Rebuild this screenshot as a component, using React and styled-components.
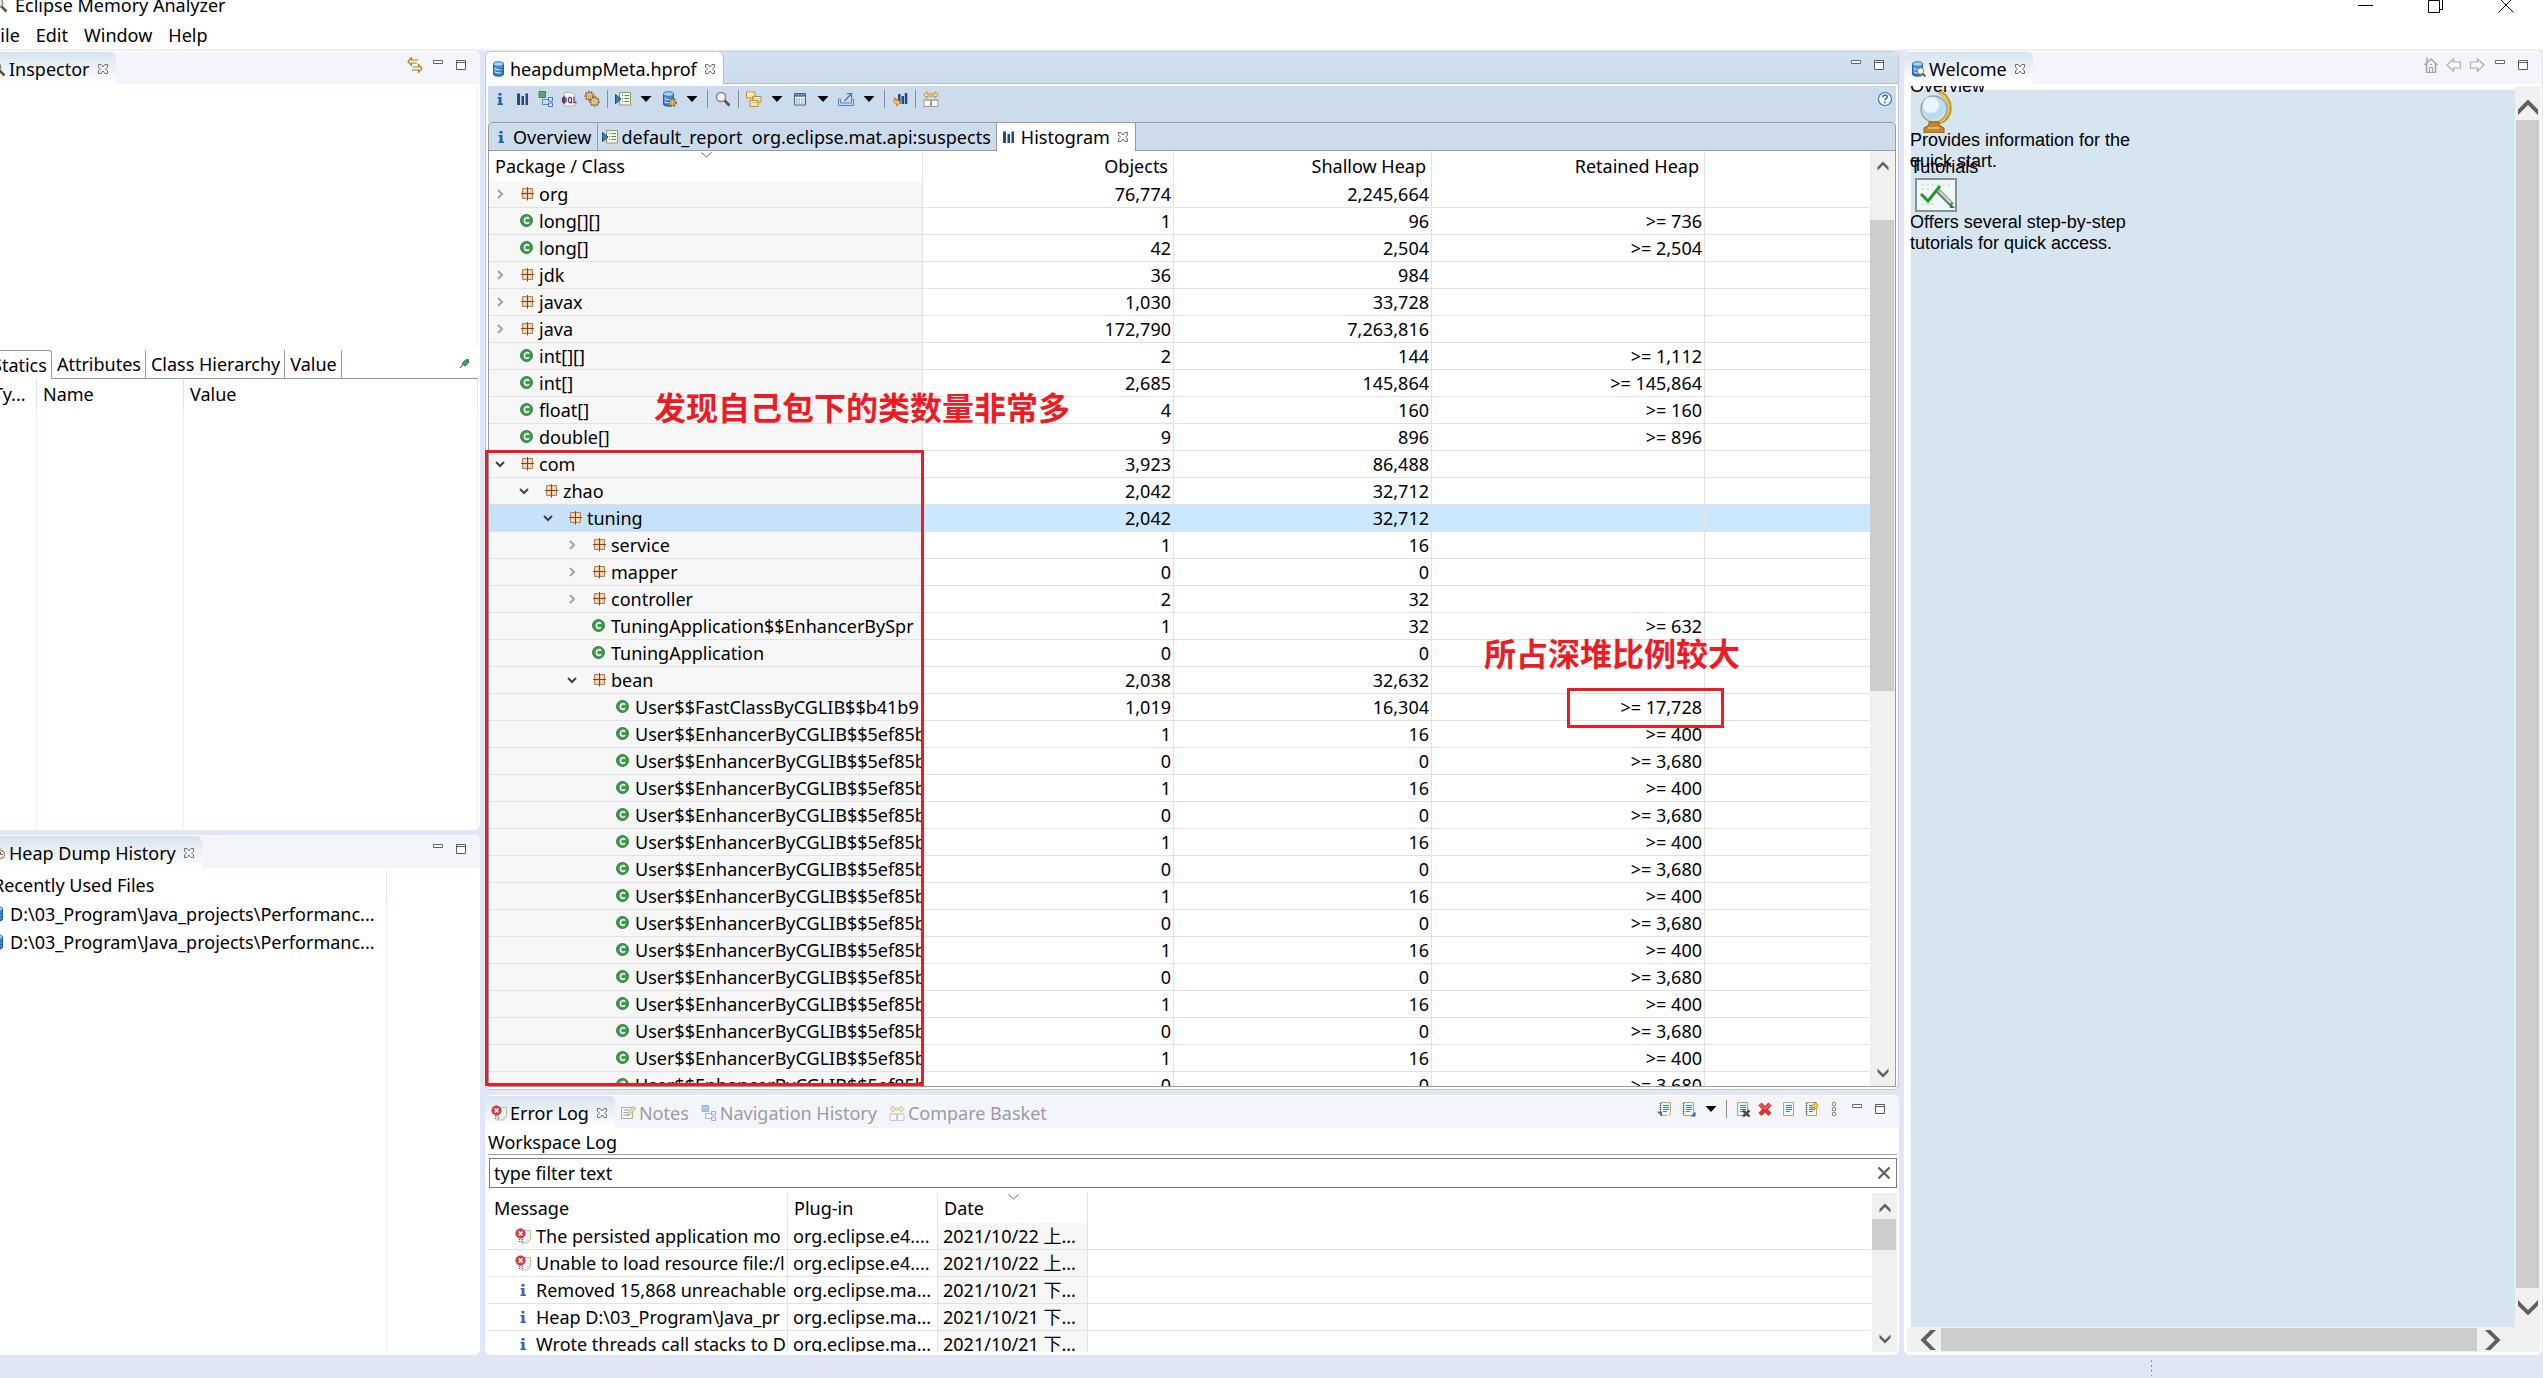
import React from 'react';
import styled, { createGlobalStyle, css } from 'styled-components';

const GlobalStyle = createGlobalStyle`
  *, *::before, *::after { box-sizing: border-box; }
  html, body, #root { height: 100%; }
  body {
    margin: 0;
    overflow: hidden;
    background: #e0e6f6;
    color: #000;
    font: 18px/26px "Noto Sans", "Noto Sans CJK SC", sans-serif;
  }
  button, input { font: inherit; color: inherit; }
  svg { display: block; flex: none; }
`;

/* ---------- window frame ---------- */

const Frame = styled.div`
  height: 100%;
  overflow: hidden;
`;

const Shell = styled.div`
  margin: -10px 0 0 -16px;
  height: calc(100% + 10px);
  display: flex;
  flex-direction: column;
`;

const TitleBar = styled.header`
  flex: none;
  height: 30px;
  padding-left: 8px;
  display: flex;
  align-items: center;
  gap: 7px;
  background: #fff;
`;

const TitleText = styled.h1`
  margin: 0;
  flex: 1;
  font-size: 18px;
  font-weight: 400;
`;

const WindowButton = styled.button`
  width: 70px;
  height: 30px;
  padding: 0;
  border: 0;
  background: none;
  display: grid;
  place-items: center;
`;

const WindowButtons = styled.div`
  display: flex;
  padding: 0 2px 4px 0;
  height: 30px;
`;

const MenuBar = styled.nav`
  flex: none;
  height: 31px;
  padding-left: 7px;
  display: flex;
  align-items: center;
  gap: 16px;
  background: #fff;
  border-bottom: 2px solid #f0f0f0;
`;

const MenuItem = styled.button`
  padding: 0;
  border: 0;
  background: none;
`;

const Workbench = styled.main`
  flex: 1;
  min-height: 0;
  display: grid;
  grid-template-columns: 496px minmax(0, 1fr) 638px;
  gap: 5px;
  padding-right: 1px;
`;

const Column = styled.div`
  display: grid;
  grid-template-rows: ${(p) => p.$rows};
  gap: 5px;
  min-height: 0;
`;

const StatusBar = styled.footer`
  flex: none;
  height: 23px;
  padding: 5px 391px 2px 0;
  display: flex;
  justify-content: flex-end;
`;

const Grip = styled.div`
  width: 1px;
  background: repeating-linear-gradient(#8f8f8f 0 2px, transparent 2px 5px);
`;

/* ---------- view panels ---------- */

const Panel = styled.section`
  min-width: 0;
  min-height: 0;
  display: flex;
  flex-direction: column;
  background: #fff;
  border-radius: 6px;
  overflow: hidden;
`;

const EditorPanel = styled(Panel)`
  border: 1px solid #c6c8cf;
  overflow: visible;
`;

const PanelHeader = styled.div`
  flex: none;
  height: 33px;
  display: flex;
  background: #f4f5fb;
  border-top: 1px solid #fff;
  border-radius: 6px 6px 0 0;
  ${(p) =>
    p.$editor &&
    css`
      height: 32px;
      border-top: 0;
      background: linear-gradient(#d3e2f1, #cddcec);
      border-bottom: 1px solid #b4b9cf;
    `}
`;

const Tab = styled.button`
  padding: 2px 8px 0 6px;
  border: 0;
  display: flex;
  align-items: center;
  gap: 3px;
  white-space: nowrap;
  color: ${(p) => (p.$idle ? '#9b9ba0' : '#000')};
  background: ${(p) => (p.$idle ? 'none' : 'linear-gradient(#d8e3ef, #fff)')};
  border-radius: 6px 6px 0 0;
  > svg:last-child:not(:first-child) { margin-left: 5px; }
`;

const EditorTab = styled(Tab)`
  height: 32px;
  background: #fff;
  padding-left: 5px;
  border-right: 1px solid #b4b9cf;
`;

const IdleTab = styled(Tab)`
  padding: 2px 7px 0 5px;
`;

const HeaderTools = styled.div`
  margin-left: auto;
  padding-right: 8px;
  height: 25px;
  display: flex;
`;

const ToolButton = styled.button`
  width: 23px;
  height: 25px;
  padding: 0;
  border: 0;
  background: none;
  display: grid;
  place-items: center;
`;

const ToolSeparator = styled.span`
  width: 8px;
  height: 18px;
  align-self: center;
  background: linear-gradient(#8a8f96, #8a8f96) center / 1px 100% no-repeat;
`;

const ToolBar = styled.div`
  flex: none;
  height: 36px;
  padding-bottom: 11px;
  display: flex;
  background: #cddced;
  > :last-child { margin-left: auto; }
`;

const EditorBody = styled.div`
  flex: 1;
  min-height: 0;
  margin: 2px 2px 2px;
  display: flex;
  flex-direction: column;
`;

const Folder = styled.div`
  flex: 1;
  min-height: 0;
  display: flex;
  flex-direction: column;
  border: 1px solid #9a9a9a;
  border-radius: 4px 4px 0 0;
  background: #cddced;
`;

const FolderTabs = styled.div`
  flex: none;
  height: 28px;
  display: flex;
  &::after { content: ''; flex: 1; border-bottom: 1px solid #9a9a9a; }
`;

const FolderTab = styled.button`
  height: 28px;
  padding: 0 5px 0 4px;
  border: 0;
  border-right: 1px solid #9a9a9a;
  border-bottom: ${(p) => (p.$active ? 0 : '1px solid #9a9a9a')};
  background: ${(p) => (p.$active ? '#fff' : 'none')};
  display: flex;
  align-items: center;
  gap: 4px;
  white-space: pre;
  > svg:nth-of-type(2) { margin: 0 2px 0 4px; }
`;

/* ---------- tables ---------- */

const Pane = styled.div`
  position: relative;
  flex: 1;
  min-height: 0;
  display: flex;
  background: #fff;
`;

const TableClip = styled.div`
  flex: 1;
  min-width: 0;
  overflow: hidden;
`;

const Table = styled.table`
  width: ${(p) => p.$width || '100%'};
  height: ${(p) => p.$height || 'auto'};
  table-layout: fixed;
  border-collapse: separate;
  border-spacing: 0;
`;

const Col = styled.col`
  width: ${(p) => (p.$w ? p.$w + 'px' : 'auto')};
`;

const HeadCell = styled.th`
  position: relative;
  height: 30px;
  padding: 0 5px 0 6px;
  font-weight: 400;
  text-align: ${(p) => p.$align || 'left'};
  white-space: nowrap;
  border-right: 1px solid ${(p) => (p.$last ? 'transparent' : '#e2e2e2')};
`;

const SortMark = styled.span`
  position: absolute;
  top: 1px;
  left: calc(50% - 5px);
`;

const Cell = styled.td`
  height: 27px;
  padding: 0 ${(p) => (p.$align ? 2 : 0)}px 0 ${(p) => (p.$align ? 0 : 5)}px;
  overflow: hidden;
  white-space: nowrap;
  text-align: ${(p) => p.$align || 'left'};
  background: ${(p) => (p.$sorted ? '#f7f7f7' : 'none')};
  border-right: 1px solid ${(p) => (p.$last ? 'transparent' : '#e2e2e2')};
  border-bottom: 1px solid #e2e2e2;
`;

const Row = styled.tr`
  ${(p) =>
    p.$selected &&
    css`
      background: #cce8ff;
      ${Cell}:first-child { background: #c7e1f8; }
    `}
`;

const TreeCell = styled(Cell)`
  padding-left: ${(p) => p.$level * 24}px;
`;

const TreeLabel = styled.div`
  display: flex;
  align-items: center;
  gap: 4px;
`;

const Twisty = styled.span`
  flex: none;
  width: 26px;
  height: 26px;
  padding-right: 4px;
  display: grid;
  place-items: center;
`;

const LogLabel = styled.div`
  display: flex;
  align-items: center;
  gap: 5px;
  padding-left: 22px;
`;

const FillCell = styled.td`
  border-right: 1px solid #e6effb;
`;

const FileRow = styled.td`
  height: 28px;
  padding: 0 0 0 3px;
  border-right: 1px solid #e6effb;
`;

const FileLink = styled.a`
  display: flex;
  align-items: center;
  gap: 4px;
  color: inherit;
  text-decoration: none;
  white-space: nowrap;
`;

/* ---------- scroll bars ---------- */

const Bar = styled.div`
  flex: none;
  display: flex;
  flex-direction: ${(p) => (p.$row ? 'row' : 'column')};
  ${(p) => (p.$row ? 'height' : 'width')}: ${(p) => p.$size}px;
  background: #f0f0f0;
`;

const BarButton = styled.button`
  flex: none;
  ${(p) => (p.$row ? 'width' : 'height')}: ${(p) => p.$len}px;
  padding: ${(p) => p.$pad || 0};
  border: 0;
  background: none;
  display: grid;
  place-items: center;
`;

const Thumb = styled.div`
  background: #cdcdcd;
  margin: ${(p) => p.$margin};
  ${(p) => (p.$len ? `height: ${p.$len}px; margin-bottom: auto;` : 'flex: 1;')}
`;

/* ---------- inspector ---------- */

const InspectorBlank = styled.div`
  flex: none;
  height: 261px;
  margin: 2px 2px 3px 3px;
  border-right: 1px solid #e6effb;
`;

const InspectorTabs = styled.div`
  flex: none;
  height: 29px;
  margin: 0 2px 0 3px;
  display: flex;
  border-bottom: 1px solid #9a9a9a;
  > :last-child { margin-left: auto; }
`;

const InspectorTab = styled.button`
  height: 29px;
  padding: 0 4px 0 5px;
  border: 0;
  border-right: 1px solid #9a9a9a;
  border-bottom: 1px solid ${(p) => (p.$active ? '#fff' : '#9a9a9a')};
  background: #fff;
  white-space: nowrap;
  ${(p) =>
    p.$active &&
    css`
      border-top: 1px solid #9a9a9a;
      border-radius: 0 3px 0 0;
    `}
`;

const PinButton = styled(ToolButton)`
  width: 28px;
`;

const InspectorTable = styled.div`
  flex: 1;
  min-height: 0;
  margin: 0 2px 3px 3px;
`;

const HistoryTable = styled.div`
  flex: 1;
  min-height: 0;
  margin: 2px 2px 3px 3px;
`;

/* ---------- error log ---------- */

const LogBody = styled.div`
  flex: 1;
  min-height: 0;
  padding: 1px 2px 3px 3px;
  display: flex;
  flex-direction: column;
`;

const LogCaption = styled.label`
  flex: none;
  height: 26px;
  border-bottom: 1px solid #a0a0a0;
`;

const FilterBox = styled.div`
  flex: none;
  height: 30px;
  margin: 3px 0 5px 1px;
  padding-right: 1px;
  display: flex;
  align-items: center;
  border: 1px solid #7a7a7a;
`;

const FilterInput = styled.input`
  flex: 1;
  min-width: 0;
  height: 28px;
  padding: 0 4px;
  border: 0;
  outline: 0;
  background: none;
`;

/* ---------- welcome ---------- */

const WelcomeBody = styled.div`
  flex: 1;
  min-height: 0;
  margin: 2px 2px 3px 3px;
  display: flex;
  flex-direction: column;
`;

const WelcomeTop = styled.div`
  flex: 1;
  min-height: 0;
  display: flex;
`;

const WelcomePage = styled.div`
  flex: 1;
  min-width: 0;
  overflow: hidden;
  padding: 4px 0 0 3px;
  background: linear-gradient(#d7e5f0, #d7e5f0) 4px 4px no-repeat;
  font: 18px/21px "Liberation Sans", Arial, sans-serif;
`;

const Topic = styled.article`
  width: 226px;
  margin-top: ${(p) => p.$shift}px;
  > svg { margin: ${(p) => p.$iconGap}; }
`;

const TopicTitle = styled.a`
  display: block;
  color: inherit;
  text-decoration: none;
`;

const TopicText = styled.p`
  margin: 0;
`;

/* ---------- annotations over the histogram ---------- */

const MarkBox = styled.div`
  position: absolute;
  left: ${(p) => p.$x}px;
  top: ${(p) => p.$y}px;
  width: ${(p) => p.$w}px;
  height: ${(p) => p.$h}px;
  border: 3px solid #ed1c24;
  pointer-events: none;
`;

const MarkText = styled.strong`
  position: absolute;
  left: ${(p) => p.$x}px;
  top: ${(p) => p.$y}px;
  font: 700 32px/40px "Noto Sans CJK SC", sans-serif;
  color: #ed1c24;
  white-space: nowrap;
  pointer-events: none;
`;

/* ---------- icons ---------- */

const Svg = ({ w = 16, h = 16, children, ...rest }) => (
  <svg width={w} height={h} viewBox={`0 0 ${w} ${h}`} fill="none" aria-hidden="true" {...rest}>
    {children}
  </svg>
);

const CloseMark = () => (
  <Svg w={10} h={10}>
    <path d="M.5 .5h2.500L5 3 7 .5h2.500V3L7.500 5 9.500 7v2.500H7L5 7 3 9.500H.5V7L2.500 5 .5 3z" fill="#fff" stroke="#6a6a6a" />
  </Svg>
);
const MinIcon = () => (
  <Svg>
    <path d="M3.500 3.500h9v3h-9z" fill="#fff" stroke="#666" />
  </Svg>
);
const MaxIcon = () => (
  <Svg>
    <path d="M3.500 3.500h9v9h-9zM3.500 5.500h9" fill="#fff" stroke="#5c5c5c" />
  </Svg>
);
const LinkIcon = () => (
  <Svg>
    <path d="M.8 4.500 4.500.8v2.200H11M4.500 6H10M.8 4.500l3.700 3.700V6M15.200 11.500l-3.700 3.700V13H5M11.500 10H6M15.200 11.500l-3.700-3.700V10" fill="#fbe9a8" stroke="#b57a14" strokeWidth="1.200" />
  </Svg>
);
const InfoIcon = ({ c = '#1666a6' }) => (
  <Svg>
    <path d="M6.500 2h3v2.500h-3zM5.500 6h4v6.500H11V14H5.500v-1.500h1.200V7.500H5.500z" fill={c} />
  </Svg>
);
const BarsIcon = () => (
  <Svg>
    <path d="M2 2.500h3V14H2zM6.500 5H9v9H6.500zM10.500 2.500H13V14h-2.500z" fill="#27477f" />
  </Svg>
);
const TreeIcon = ({ faded }) => (
  <Svg opacity={faded ? 0.55 : 1}>
    <path d="M4.500 8v5.500H10M4.500 8.500h6" stroke="#5b87bd" />
    <path d="M1 .5h6.500v6H1z" fill={faded ? '#7ea6da' : '#5aa96f'} stroke={faded ? '#4d7fc0' : '#3a8a58'} />
    <path d="M10.500 6.500h4v3.500h-4zM10.500 12h4v3.500h-4z" fill="#dbe9f8" stroke="#4b79b5" />
  </Svg>
);
const OqlIcon = () => (
  <Svg>
    <path d="M3.500 1.500h7l3.500 3v10.500H3.500z" fill="#f7f7f4" stroke="#c0b48c" />
    <path d="M1 5h13v8H1z" fill="#f7f7f4" />
    <path d="M2.500 6h1v6h-1zM5 6.500v5M1.500 6.500v5M7.500 6.500v5M10.500 6.500v6M9 6h0M8 6.500h2M8 11.500h3M13 5.500v6h2.500" stroke="#5d3a78" strokeWidth="1.300" />
  </Svg>
);
const Gear = ({ x, y, r }) => (
  <g>
    <circle cx={x} cy={y} r={r} fill="#f0d79a" stroke="#8f6422" strokeWidth="2" strokeDasharray="1.800 1" />
    <circle cx={x} cy={y} r={r - 0.8} fill="#f6e2b0" stroke="#a87a30" strokeWidth=".8" />
    <circle cx={x} cy={y} r={r * 0.35} fill="#fff" stroke="#8f6422" strokeWidth=".8" />
  </g>
);
const GearsIcon = () => (
  <Svg>
    <Gear x={5.5} y={5} r={4} />
    <Gear x={10.5} y={10.5} r={4.2} />
  </Svg>
);
const ReportIcon = () => (
  <Svg>
    <path d="M4.500 1.500h11v12.500h-11z" fill="#f4f8ef" stroke="#a8924a" />
    <path d="M9.500 4.500h4.500M9.500 7.500h4.500M9.500 10.500h4.500" stroke="#3f9a5a" />
    <path d="M7 4.500h1M7 7.500h1M7 10.500h1" stroke="#3f9a5a" />
    <path d="M.5 3.500 6 8 .5 12.500z" fill="#3f7fae" stroke="#1d4e78" />
  </Svg>
);
const DbIcon = ({ children }) => (
  <Svg>
    <path d="M2.500 3v10c0 3 10 3 10 0V3z" fill="#4e93dd" stroke="#2160b4" />
    <path d="M2.500 6c0 2.500 10 2.500 10 0M2.500 9.300c0 2.500 10 2.500 10 0M2.500 12.300c0 2.500 10 2.500 10 0" stroke="#1d55a8" />
    <path d="M3.500 7c1.500 1.500 4 1.700 6 1.300M3.500 10.300c1.500 1.500 4 1.700 6 1.300" stroke="#c4e2fb" strokeWidth="1.100" />
    <ellipse cx="7.500" cy="3" rx="5" ry="2.300" fill="#a4d4f2" stroke="#2b74bd" />
    {children}
  </Svg>
);
const DbGearIcon = () => (
  <DbIcon>
    <Gear x={11.5} y={11.5} r={3.4} />
  </DbIcon>
);
const LensIcon = () => (
  <Svg>
    <path d="m9.500 9.500 5 5" stroke="#6b4a3a" strokeWidth="2.500" />
    <circle cx="6" cy="6" r="4.600" fill="#eef4f4" stroke="#8a8578" strokeWidth="1.500" />
  </Svg>
);
const WelcomeIcon = () => (
  <DbIcon>
    <path d="m12.500 12.500 3 3" stroke="#7a4a2a" strokeWidth="1.800" />
    <circle cx="10.500" cy="10" r="3.200" fill="#f4f6ef" stroke="#8a8578" />
  </DbIcon>
);
const GroupIcon = () => (
  <Svg>
    <path d="M.5 1h8.500v6H.5zM6.500 5.500H15V11H6.500zM4 9.500h8v6H4z" fill="#fbe3a0" stroke="#bf8f34" />
    <path d="M1.500 2h5M7.500 6.500h6M5 10.500h6" stroke="#fff6d8" />
  </Svg>
);
const CalcIcon = () => (
  <Svg>
    <path d="M2.500 2.500h11v11.500h-11z" fill="#f3f7fa" stroke="#3b6377" />
    <path d="M3 4.500h10" stroke="#4b7f98" strokeWidth="2.500" />
    <path d="M4 8h8.500M4 10h8.500M4 12h8.500" stroke="#5a8fa8" strokeWidth="1.200" strokeDasharray="1.500 1" />
  </Svg>
);
const ExportIcon = () => (
  <Svg>
    <path d="M.5 8v6.500h15V8h-2v4h-11V8z" fill="#c5d8ee" stroke="#5c86bb" />
    <path d="M6.500 10 13 3M9 2.500h4.500V7" stroke="#3a72aa" strokeWidth="1.200" />
  </Svg>
);
const BarsArrowIcon = () => (
  <Svg>
    <path d="M6 3h2.500v10H6zM9.500 5h2.500v8H9.500zM12.800 2h2.500v11h-2.500z" fill="#27477f" />
    <path d="M2 7v3.500c0 1.500 1 2 2.500 2V15l4-3.500-4-3.500v2.200C3.500 10 3.500 9 3.500 7z" fill="#f7cf5c" stroke="#b57a14" strokeWidth=".8" />
  </Svg>
);
const CompareIcon = ({ faded }) => (
  <Svg opacity={faded ? 0.5 : 1}>
    <path d="M.8 4 4 .8V3h8V.8L15.200 4 12 7V5H4v2z" fill="#fbe6a0" stroke="#b98420" strokeWidth=".9" />
    <path d="M1 9h6.500v6.500H1zM8.500 9H15v6.500H8.500z" fill="#fff" stroke="#9a9c88" />
    <path d="M1 9h14" stroke="#8fb0a8" />
  </Svg>
);
const CaretIcon = () => (
  <Svg>
    <path d="M2.500 5h11L8 11z" fill="#000" />
  </Svg>
);
const HelpIcon = () => (
  <Svg>
    <circle cx="8" cy="8" r="6.500" fill="#fff" stroke="#2f79ad" strokeWidth="1.200" />
    <path d="M5.800 6.300c0-3 4.400-3 4.400-.3 0 1.500-2.200 1.700-2.200 3.300M8 10.500v1.700" stroke="#2470a8" strokeWidth="1.600" />
  </Svg>
);
const PackageIcon = () => (
  <Svg>
    <path d="M3.500 2.500h10v10h-10z" fill="#efc9a0" stroke="#b5825e" />
    <path d="M8.500 1v13.500M2 7.500h13" stroke="#80452c" />
    <path d="M5 5h2M10 5h2M5 10h2M10 10h2" stroke="#fae6c8" strokeWidth="2" />
  </Svg>
);
const ClassIcon = () => (
  <Svg>
    <circle cx="7.500" cy="7.500" r="6" fill="#3c9b45" stroke="#2c7f4c" />
    <path d="M10 5.700C8.500 4 5.400 4.500 5.400 7.500s3.100 3.500 4.600 1.800" stroke="#fff" strokeWidth="1.700" />
  </Svg>
);
const Chevron = ({ open }) => (
  <Svg w={10} h={10}>
    {open ? (
      <path d="M1 3l4 4 4-4" stroke="#404040" strokeWidth="2" />
    ) : (
      <path d="M3 1l4 4-4 4" stroke="#a2a2a2" strokeWidth="2" />
    )}
  </Svg>
);
const SortIcon = () => (
  <Svg w={11} h={6}>
    <path d="M.5.5l5 4.500 5-4.500" stroke="#6a6a6a" />
  </Svg>
);
const ErrorIcon = () => (
  <Svg>
    <path d="M6 2.500h9.500v9l-3 3.500H6z" fill="#eaf3fa" stroke="#c9bd8c" />
    <path d="M12 15v-3.500h3.500z" fill="#f2cfae" />
    <path d="M4.500 11v4M7.500 11v4" stroke="#2f5b93" strokeDasharray="1 1" />
    <circle cx="5.500" cy="5.500" r="4.600" fill="#d8404a" stroke="#b32c38" />
    <path d="m3.800 3.500 3.600 4M7.400 3.500l-3.600 4" stroke="#fff" strokeWidth="1.500" />
  </Svg>
);
const NotesIcon = () => (
  <Svg opacity=".6">
    <path d="M1.500 2.500h11v11h-11z" fill="#fff" stroke="#777" />
    <path d="M3.500 5h6M3.500 7.500h4M3.500 10h3" stroke="#666" />
    <path d="m7 11 1-3 5.500-6.500 2 1.700L10 9.800z" fill="#ecd98a" stroke="#927a32" />
  </Svg>
);
const LogPage = ({ children }) => (
  <Svg>
    <path d="M3.500 1.500h10v13h-10z" fill="#eef4fb" stroke="#b7a75e" />
    <path d="M6 4.500h6M6 6.500h6M6 8.500h6M6 10.500h4" stroke="#4b7cb4" />
    {children}
  </Svg>
);
const ImportLogIcon = () => (
  <LogPage>
    <path d="M3.500 2v10" stroke="#2f5f96" strokeDasharray="1 1" strokeWidth="1.500" />
    <path d="M0 10.500 5 15.500V11z" fill="#2c6da8" />
    <path d="M9 15l4.500-4v4z" fill="#f5d9c2" />
  </LogPage>
);
const ExportLogIcon = () => (
  <LogPage>
    <path d="M3.500 2v12" stroke="#2f5f96" strokeDasharray="1 1" strokeWidth="1.500" />
    <path d="M15.500 10.500v5h-5z" fill="#2c6da8" />
  </LogPage>
);
const ClearLogIcon = () => (
  <LogPage>
    <path d="m9 9.500 6.500 6M15.500 9.500l-6.500 6" stroke="#4a4a4a" strokeWidth="2.500" />
  </LogPage>
);
const DeleteIcon = () => (
  <Svg>
    <path d="M3 3l10 10.500M13 3 3 13.500" stroke="#d83236" strokeWidth="4.400" />
    <path d="M3 3.500l5 4L13 3.500" stroke="#ef6a66" strokeWidth="1.500" />
  </Svg>
);
const RestoreLogIcon = () => (
  <LogPage>
    <path d="M3.500 2v12" stroke="#2f5f96" strokeDasharray="1 1" strokeWidth="1.500" />
    <path d="M8 8.500c0-4 1-5 3.500-5V.8L15.500 5l-4 3.500V6.200C10 6.200 9 7 8 8.500z" fill="#f8d35a" stroke="#a8842a" strokeWidth=".8" />
  </LogPage>
);
const MoreIcon = () => (
  <Svg>
    <g fill="#fff" stroke="#777">
      <circle cx="8" cy="3" r="1.800" />
      <circle cx="8" cy="8" r="1.800" />
      <circle cx="8" cy="13" r="1.800" />
    </g>
  </Svg>
);
const ClearIcon = () => (
  <Svg>
    <path d="M2.500 2.500l11 11M13.500 2.500l-11 11" stroke="#5e5e5e" strokeWidth="2.200" />
  </Svg>
);
const HistoryIcon = () => (
  <Svg>
    <path d="M2 2.500h8v10H2z" fill="#f6f6f0" stroke="#9a8a5a" />
    <circle cx="10.500" cy="9.500" r="4" fill="#fff" stroke="#7a5a3a" />
    <path d="M10.500 7v2.500h2.500" stroke="#7a5a3a" />
  </Svg>
);
const PinIcon = () => (
  <Svg>
    <path d="m4 13 3.500-4" stroke="#234" />
    <path d="M6 8.500 9.500 5l3-.5v3L9 11z" fill="#3aa05a" stroke="#1f7a45" />
  </Svg>
);
const HomeIcon = () => (
  <Svg>
    <path d="M3.500 7v8.500h9V7L8 2.500z" fill="#f4f4f4" />
    <path d="M1.500 8 8 2l6.500 6M3.500 6.500v9h9v-9M4 .5v5" stroke="#a5a5a5" strokeWidth="1.500" />
    <path d="M6.500 10.500h3v5h-3zM7 7.500h2" stroke="#a5a5a5" />
  </Svg>
);
const ArrowIcon = ({ right }) => (
  <Svg transform={right ? 'scale(-1,1)' : undefined}>
    <path d="M1 8 7.500 1.800V5h7v6h-7v3.200z" fill="#f8f8f8" stroke="#acacac" strokeWidth="1.200" />
  </Svg>
);
const ScrollArrow = ({ dir, big }) => {
  const turn = { up: 0, right: 90, down: 180, left: 270 }[dir];
  const s = big ? 20 : 14;
  return (
    <Svg w={s} h={s}>
      <path
        d={big ? 'M0 12.500 10 2.500l10 10v5.500L10 8 0 18z' : 'M1.500 8 7 2.500 12.500 8v3.500L7 6l-5.500 5.500z'}
        fill="#606060"
        transform={`rotate(${turn} ${s / 2} ${s / 2})`}
      />
    </Svg>
  );
};
const GlobeIcon = () => (
  <Svg w={34} h={42}>
    <path d="M20 1c15 6 15 30-4 31" stroke="#c99a22" strokeWidth="4" />
    <path d="M21 2c13 7 12 27-4 30" stroke="#f2d675" strokeWidth="1.200" />
    <circle cx="15" cy="18" r="13" fill="#b9dcf4" stroke="#9aa898" strokeWidth="1.500" />
    <ellipse cx="12" cy="14" rx="8" ry="8" fill="#e9f6fd" />
    <path d="M8 27c6 3 14 0 18-6-1 6-6 9-11 9-3 0-5-1-7-3z" fill="#dfe6b0" />
    <path d="M10 31h10v3l5 3v5H5v-5l5-3z" fill="#c5862c" stroke="#8d5b1d" />
    <path d="M9 37h11" stroke="#f0c878" strokeWidth="1.500" />
  </Svg>
);
const TutorialIcon = () => (
  <Svg w={42} h={34}>
    <path d="M1 1h40v32H1z" fill="#f1f9f8" stroke="#8b8f8f" strokeWidth="2" />
    <path d="M6 7h16M6 11h9M22 7h14M6 22h12M6 26h14" stroke="#bdd6d2" strokeDasharray="3 2" />
    <path d="m6 16 7 7L25 8" stroke="#1f9a2c" strokeWidth="3" />
    <path d="m23 13 14 14" stroke="#747a7a" strokeWidth="5" />
    <path d="m24 13 12 12" stroke="#d5dada" strokeWidth="2" />
    <path d="m35 25 5 5h-5z" fill="#22833a" />
  </Svg>
);

/* ---------- data ---------- */

const enhancer = (i) => [
  4, 'class', 'User$$EnhancerByCGLIB$$5ef85b',
  i % 2 ? '0' : '1', i % 2 ? '0' : '16', i % 2 ? '>= 3,680' : '>= 400',
];

const histogram = [
  [0, 'closed', 'org', '76,774', '2,245,664', ''],
  [0, 'class', 'long[][]', '1', '96', '>= 736'],
  [0, 'class', 'long[]', '42', '2,504', '>= 2,504'],
  [0, 'closed', 'jdk', '36', '984', ''],
  [0, 'closed', 'javax', '1,030', '33,728', ''],
  [0, 'closed', 'java', '172,790', '7,263,816', ''],
  [0, 'class', 'int[][]', '2', '144', '>= 1,112'],
  [0, 'class', 'int[]', '2,685', '145,864', '>= 145,864'],
  [0, 'class', 'float[]', '4', '160', '>= 160'],
  [0, 'class', 'double[]', '9', '896', '>= 896'],
  [0, 'open', 'com', '3,923', '86,488', ''],
  [1, 'open', 'zhao', '2,042', '32,712', ''],
  [2, 'open', 'tuning', '2,042', '32,712', ''],
  [3, 'closed', 'service', '1', '16', ''],
  [3, 'closed', 'mapper', '0', '0', ''],
  [3, 'closed', 'controller', '2', '32', ''],
  [3, 'class', 'TuningApplication$$EnhancerBySpr', '1', '32', '>= 632'],
  [3, 'class', 'TuningApplication', '0', '0', ''],
  [3, 'open', 'bean', '2,038', '32,632', ''],
  [4, 'class', 'User$$FastClassByCGLIB$$b41b9', '1,019', '16,304', '>= 17,728'],
  ...Array.from({ length: 14 }, (_, i) => enhancer(i)),
];

const logEntries = [
  ['error', 'The persisted application mo', 'org.eclipse.e4....', '2021/10/22 上...'],
  ['error', 'Unable to load resource file:/l', 'org.eclipse.e4....', '2021/10/22 上...'],
  ['info', 'Removed 15,868 unreachable', 'org.eclipse.ma...', '2021/10/21 下...'],
  ['info', 'Heap D:\\03_Program\\Java_pr', 'org.eclipse.ma...', '2021/10/21 下...'],
  ['info', 'Wrote threads call stacks to D', 'org.eclipse.ma...', '2021/10/21 下...'],
];

const toolbar = [
  ['Overview', InfoIcon], ['Histogram', BarsIcon], ['Dominator tree', TreeIcon], ['Query', OqlIcon], ['Thread overview', GearsIcon], null,
  ['Run report', ReportIcon], ['More reports', CaretIcon], ['Query browser', DbGearIcon], ['More queries', CaretIcon], null,
  ['Find', LensIcon], null,
  ['Group', GroupIcon], ['More grouping', CaretIcon], ['Calculate', CalcIcon], ['More calculations', CaretIcon], ['Export', ExportIcon], ['More exports', CaretIcon], null,
  ['Compare to heap dump', BarsArrowIcon], null,
  ['Compare', CompareIcon],
];

const logTools = [
  ['Export log', ImportLogIcon], ['Import log', ExportLogIcon], ['More', CaretIcon], null,
  ['Clear log', ClearLogIcon], ['Delete log', DeleteIcon], ['Open log', LogPage], ['Restore log', RestoreLogIcon], ['View menu', MoreIcon],
  ['Minimize', MinIcon], ['Maximize', MaxIcon],
];

const Tools = ({ items }) =>
  items.map((item, i) => {
    if (!item) return <ToolSeparator key={i} />;
    const [name, Icon] = item;
    return (
      <ToolButton key={i} aria-label={name}>
        <Icon />
      </ToolButton>
    );
  });

const sizeTools = [['Minimize', MinIcon], ['Maximize', MaxIcon]];

/* ---------- views ---------- */

const Inspector = () => (
  <Panel>
    <PanelHeader>
      <Tab><LensIcon />Inspector<CloseMark /></Tab>
      <HeaderTools><Tools items={[['Link with snapshot', LinkIcon], ...sizeTools]} /></HeaderTools>
    </PanelHeader>
    <InspectorBlank />
    <InspectorTabs>
      <InspectorTab $active>Statics</InspectorTab>
      <InspectorTab>Attributes</InspectorTab>
      <InspectorTab>Class Hierarchy</InspectorTab>
      <InspectorTab>Value</InspectorTab>
      <PinButton aria-label="Pin"><PinIcon /></PinButton>
    </InspectorTabs>
    <InspectorTable>
      <Table $height="100%">
        <colgroup><Col $w={50} /><Col $w={147} /><Col /></colgroup>
        <thead>
          <tr>
            <HeadCell>Ty...</HeadCell>
            <HeadCell>Name</HeadCell>
            <HeadCell>Value</HeadCell>
          </tr>
        </thead>
        <tbody><tr><FillCell /><FillCell /><FillCell /></tr></tbody>
      </Table>
    </InspectorTable>
  </Panel>
);

const History = () => (
  <Panel>
    <PanelHeader>
      <Tab><HistoryIcon />Heap Dump History<CloseMark /></Tab>
      <HeaderTools><Tools items={sizeTools} /></HeaderTools>
    </PanelHeader>
    <HistoryTable>
      <Table $height="100%" $width="400px">
        <thead><tr><HeadCell>Recently Used Files</HeadCell></tr></thead>
        <tbody>
          {[0, 1].map((i) => (
            <tr key={i}>
              <FileRow>
                <FileLink href="#file"><DbIcon />{'D:\\03_Program\\Java_projects\\Performanc...'}</FileLink>
              </FileRow>
            </tr>
          ))}
          <tr><FillCell /></tr>
        </tbody>
      </Table>
    </HistoryTable>
  </Panel>
);

const Histogram = () => (
  <Pane>
    <TableClip>
      <Table>
        <colgroup><Col $w={434} /><Col $w={251} /><Col $w={258} /><Col $w={273} /><Col /></colgroup>
        <thead>
          <tr>
            <HeadCell>Package / Class<SortMark><SortIcon /></SortMark></HeadCell>
            <HeadCell $align="right">Objects</HeadCell>
            <HeadCell $align="right">Shallow Heap</HeadCell>
            <HeadCell $align="right">Retained Heap</HeadCell>
            <HeadCell $last />
          </tr>
        </thead>
        <tbody>
          {histogram.map(([level, kind, name, objects, shallow, retained], i) => (
            <Row key={i} $selected={name === 'tuning'}>
              <TreeCell $level={level} $sorted>
                <TreeLabel>
                  <Twisty>{kind !== 'class' && <Chevron open={kind === 'open'} />}</Twisty>
                  {kind === 'class' ? <ClassIcon /> : <PackageIcon />}
                  {name}
                </TreeLabel>
              </TreeCell>
              <Cell $align="right">{objects}</Cell>
              <Cell $align="right">{shallow}</Cell>
              <Cell $align="right">{retained}</Cell>
              <Cell $last />
            </Row>
          ))}
        </tbody>
      </Table>
    </TableClip>
    <Bar $size={25}>
      <BarButton $len={26} $pad="4px 0 0" aria-label="Scroll up"><ScrollArrow dir="up" /></BarButton>
      <Thumb $len={471} $margin="43px 1px 0 0" />
      <BarButton $len={26} aria-label="Scroll down"><ScrollArrow dir="down" /></BarButton>
    </Bar>
    <MarkBox $x={-4} $y={299} $w={439} $h={636} />
    <MarkBox $x={1078} $y={537} $w={157} $h={40} />
    <MarkText $x={165} $y={235}>发现自己包下的类数量非常多</MarkText>
    <MarkText $x={995} $y={481}>所占深堆比例较大</MarkText>
  </Pane>
);

const Editor = () => (
  <EditorPanel>
    <PanelHeader $editor>
      <EditorTab><DbIcon />heapdumpMeta.hprof<CloseMark /></EditorTab>
      <HeaderTools><Tools items={sizeTools} /></HeaderTools>
    </PanelHeader>
    <EditorBody>
      <ToolBar>
        <Tools items={toolbar} />
        <ToolButton aria-label="Help"><HelpIcon /></ToolButton>
      </ToolBar>
      <Folder>
        <FolderTabs>
          <FolderTab><InfoIcon />Overview</FolderTab>
          <FolderTab><ReportIcon />{'default_report  org.eclipse.mat.api:suspects'}</FolderTab>
          <FolderTab $active><BarsIcon />Histogram<CloseMark /></FolderTab>
        </FolderTabs>
        <Histogram />
      </Folder>
    </EditorBody>
  </EditorPanel>
);

const ErrorLog = () => (
  <Panel>
    <PanelHeader>
      <Tab><ErrorIcon />Error Log<CloseMark /></Tab>
      <IdleTab $idle><NotesIcon />Notes</IdleTab>
      <IdleTab $idle><TreeIcon faded />Navigation History</IdleTab>
      <IdleTab $idle><CompareIcon faded />Compare Basket</IdleTab>
      <HeaderTools><Tools items={logTools} /></HeaderTools>
    </PanelHeader>
    <LogBody>
      <LogCaption htmlFor="log-filter">Workspace Log</LogCaption>
      <FilterBox>
        <FilterInput id="log-filter" type="text" defaultValue="type filter text" />
        <ToolButton aria-label="Clear filter"><ClearIcon /></ToolButton>
      </FilterBox>
      <Pane>
        <TableClip>
          <Table>
            <colgroup><Col $w={300} /><Col $w={150} /><Col $w={150} /><Col /></colgroup>
            <thead>
              <tr>
                <HeadCell>Message</HeadCell>
                <HeadCell>Plug-in</HeadCell>
                <HeadCell>Date<SortMark><SortIcon /></SortMark></HeadCell>
                <HeadCell $last />
              </tr>
            </thead>
            <tbody>
              {logEntries.map(([kind, message, plugin, date], i) => (
                <tr key={i}>
                  <Cell>
                    <LogLabel>
                      {kind === 'error' ? <ErrorIcon /> : <InfoIcon c="#3466b4" />}
                      {message}
                    </LogLabel>
                  </Cell>
                  <Cell>{plugin}</Cell>
                  <Cell $sorted>{date}</Cell>
                  <Cell $last />
                </tr>
              ))}
            </tbody>
          </Table>
        </TableClip>
        <Bar $size={25}>
          <BarButton $len={26} $pad="4px 0 0" aria-label="Scroll up"><ScrollArrow dir="up" /></BarButton>
          <Thumb $len={31} $margin="0 1px 0 0" />
          <BarButton $len={26} aria-label="Scroll down"><ScrollArrow dir="down" /></BarButton>
        </Bar>
      </Pane>
    </LogBody>
  </Panel>
);

const ForwardIcon = () => <ArrowIcon right />;

const Welcome = () => (
  <Panel>
    <PanelHeader>
      <Tab><WelcomeIcon />Welcome<CloseMark /></Tab>
      <HeaderTools>
        <Tools items={[['Home', HomeIcon], ['Back', ArrowIcon], ['Forward', ForwardIcon], ...sizeTools]} />
      </HeaderTools>
    </PanelHeader>
    <WelcomeBody>
      <WelcomeTop>
        <WelcomePage>
          <Topic $shift={-14} $iconGap="-6px 0 -3px 9px">
            <TopicTitle href="#overview">Overview</TopicTitle>
            <GlobeIcon />
            <TopicText>Provides information for the quick start.</TopicText>
          </Topic>
          <Topic $shift={-15} $iconGap="0 0 0 5px">
            <TopicTitle href="#tutorials">Tutorials</TopicTitle>
            <TutorialIcon />
            <TopicText>Offers several step-by-step tutorials for quick access.</TopicText>
          </Topic>
        </WelcomePage>
        <Bar $size={25}>
          <BarButton $len={34} $pad="8px 0 0" aria-label="Scroll up"><ScrollArrow dir="up" big /></BarButton>
          <Thumb $margin="0 1px" />
          <BarButton $len={39} aria-label="Scroll down"><ScrollArrow dir="down" big /></BarButton>
        </Bar>
      </WelcomeTop>
      <Bar $row $size={25}>
        <BarButton $row $len={34} $pad="0 0 0 8px" aria-label="Scroll left"><ScrollArrow dir="left" big /></BarButton>
        <Thumb $margin="1px 0" />
        <BarButton $row $len={63} $pad="0 31px 0 0" aria-label="Scroll right"><ScrollArrow dir="right" big /></BarButton>
      </Bar>
    </WelcomeBody>
  </Panel>
);

export default function App() {
  return (
    <Frame>
      <GlobalStyle />
      <Shell>
        <TitleBar>
          <LensIcon />
          <TitleText>Eclipse Memory Analyzer</TitleText>
          <WindowButtons>
            <WindowButton aria-label="Minimize window">
              <Svg><path d="M0 8.500h15" stroke="#000" /></Svg>
            </WindowButton>
            <WindowButton aria-label="Restore window">
              <Svg><path d="M.5 3.500h11v12H.5zM3.500 3.500v-3h11v12h-3" stroke="#000" /></Svg>
            </WindowButton>
            <WindowButton aria-label="Close window">
              <Svg><path d="M.5.5l15 15M15.500.5l-15 15" stroke="#000" /></Svg>
            </WindowButton>
          </WindowButtons>
        </TitleBar>
        <MenuBar>
          {['File', 'Edit', 'Window', 'Help'].map((m) => <MenuItem key={m}>{m}</MenuItem>)}
        </MenuBar>
        <Workbench>
          <Column $rows="minmax(0, 1fr) 520px">
            <Inspector />
            <History />
          </Column>
          <Column $rows="minmax(0, 1fr) 260px">
            <Editor />
            <ErrorLog />
          </Column>
          <Welcome />
        </Workbench>
        <StatusBar><Grip /></StatusBar>
      </Shell>
    </Frame>
  );
}
